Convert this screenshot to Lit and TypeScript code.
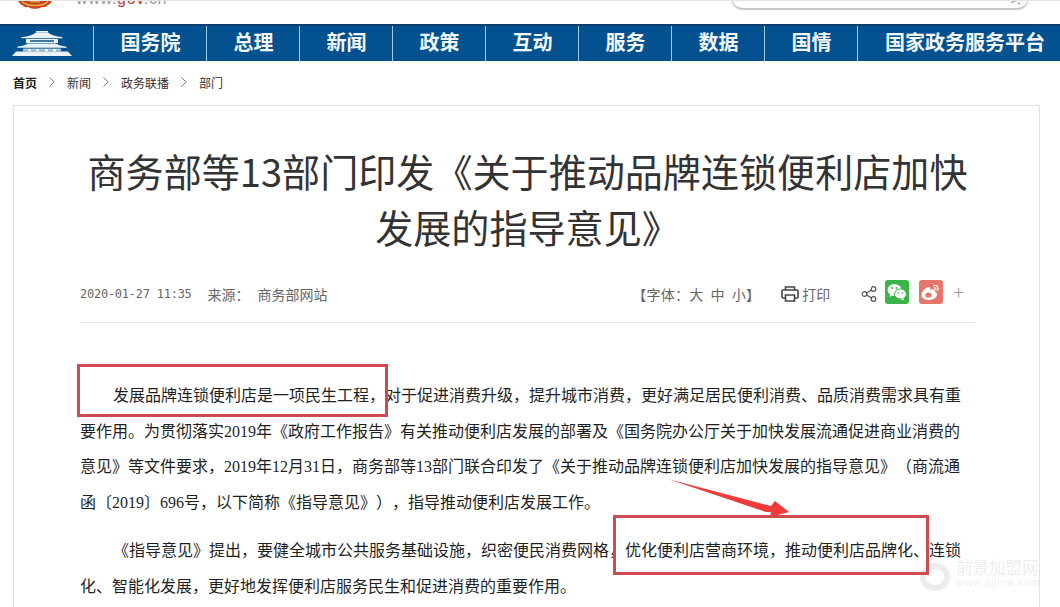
import { LitElement, html, css, unsafeCSS } from "lit";
import { customElement } from "lit/decorators.js";

const NAV = ["国务院", "总理", "新闻", "政策", "互动", "服务", "数据", "国情", "国家政务服务平台"];
const CJK = unsafeCSS(`"Noto Sans CJK SC", "Liberation Sans", sans-serif`);

const chevron = html`<i><svg width="6" height="10" viewBox="0 0 6 10" fill="none" stroke="#777" stroke-width="1"><path d="M.5 .5L5.200 5 .5 9.500"/></svg></i>`;

@customElement("app-root")
export class AppRoot extends LitElement {
  static styles = css`
    :host { display: block; width: 1060px; height: 607px; overflow: hidden; background: #fff; position: relative; font-family: ${CJK}; color: #333; text-spacing-trim: space-all; }
    .top { height: 24px; display: flex; overflow: hidden; position: relative; border-top: 1px solid #e4e4e4; box-sizing: border-box; }
    .emblem { margin: -1px 0 0 18px; flex: none; display: block; }
    .url { margin: -12px 0 0 24px; font: 16px/20px "Liberation Sans", sans-serif; letter-spacing: 0.7px; color: #9a9a9a; white-space: nowrap; }
    .url b { color: #b6433f; font-weight: 400; }
    .search { width: 298px; height: 30px; margin: -21px 31px 0 auto; border: 1px solid #c9c9c9; border-bottom-width: 2px; border-radius: 0 0 12px 12px; box-sizing: border-box; display: flex; align-items: flex-end; justify-content: flex-end; padding: 0 6px 3px 0; }
    nav { height: 37px; background: #03518f; border-top: 2px solid #0b3f6e; box-sizing: border-box; display: grid; grid-template-columns: 93px 113px repeat(7, 93px) 1fr; }
    .logo { display: flex; align-items: center; justify-content: center; padding-right: 9px; }
    .cell { border-left: 1px solid #a3cbe6; display: flex; align-items: center; justify-content: center; color: #f2f7fb; font-size: 20px; font-weight: 700; line-height: 1; padding: 0 0 4px 1px; box-sizing: border-box; white-space: nowrap; }
    .cell:last-child { padding-left: 12px; }
    .crumbs { height: 44px; display: flex; align-items: center; padding: 0 0 2px 13px; font-size: 12px; color: #333; box-sizing: border-box; }
    .crumbs b { font-weight: 700; color: #222; }
    .crumbs i { font-style: normal; width: 30px; display: flex; justify-content: center; }
    .card { margin: 0 20px 0 13px; border: 1px solid #e2e2e2; border-bottom: 0; padding: 37px 64px 0 66px; height: 520px; box-sizing: border-box; }
    h1 { margin: 0; font-size: 38.100px; line-height: 56px; font-weight: 400; text-align: center; color: #333; white-space: nowrap; }
    .meta { margin-top: 22px; height: 46px; padding-bottom: 12px; border-bottom: 1px solid #e3e3e3; display: flex; align-items: center; font-size: 14px; color: #666; box-sizing: border-box; }
    .date { font: 12px "DejaVu Sans Mono", "Liberation Mono", monospace; letter-spacing: -0.25px; margin-right: 16px; color: #666; }
    .src { margin-left: 8px; }
    .tools { margin-left: auto; display: flex; align-items: center; }
    .font { margin-right: 21px; white-space: pre; letter-spacing: 0.3px; }
    .print { display: flex; align-items: center; gap: 3px; margin-right: 31px; }
    .share { margin-right: 8px; }
    .btn { width: 24px; height: 24px; border-radius: 3px; display: flex; align-items: center; justify-content: center; margin: 0 10px 3px 0; }
    .wx { background: #3bb44a; }
    .wb { background: #e8756a; }
    .plus { font-size: 20px; color: #999; font-weight: 300; margin: -4px 11px 0 0; line-height: 1; }
    .body { margin-top: 55px; width: 880px; color: #1f1f1f; font-family: "Liberation Serif", ${CJK}; font-size: 16px; line-height: 35.6px; }
    .body p { margin: 0 0 13px; }
    .ln { display: block; white-space: nowrap; text-align: justify; text-align-last: justify; }
    .ln.end { text-align-last: left; }
    .ln.ind { padding-left: 33px; }
    .mark { position: absolute; border: 3px solid #cf4b4f; box-sizing: border-box; }
    .m1 { left: 77px; top: 364px; width: 311px; height: 53px; }
    .m2 { left: 613px; top: 515px; width: 316px; height: 60px; }
    .arrow { position: absolute; left: 660px; top: 470px; }
    .wm { position: absolute; left: 920px; top: 558px; display: flex; align-items: flex-start; gap: 6px; color: #000; opacity: .07; white-space: nowrap; }
    .wm span { width: 30px; height: 28px; margin-top: 5px; border: 6px solid #000; border-radius: 50%; box-sizing: border-box; flex: none; }
    .wm div { display: flex; flex-direction: column; font-size: 16.500px; line-height: 18px; }
    .wm small { font: 10.500px/12px "Liberation Sans", sans-serif; letter-spacing: 0.8px; }
  `;

  render() {
    return html`
      <div class="top">
        <svg class="emblem" width="34" height="9" viewBox="0 0 34 9">
          <path d="M0 0h34c-.5 3-2.500 4.500-5 5.500-1 1.500-3 2-5 1.500-2 1.300-5 1.800-7 1.800s-5-.5-7-1.800c-2 .5-4 0-5-1.500C2.500 4.500 .5 3 0 0z" fill="#c8431f"/>
          <path d="M4 1.500c3 3 6 4 13 4s10-1 13-4" fill="none" stroke="#e9b04a" stroke-width="1.500"/>
          <path d="M12 0h10v2.500H12z" fill="#e0903a"/>
        </svg>
        <div class="url">www.<b>gov</b>.cn</div>
        <div class="search">
          <svg width="12" height="6" viewBox="0 0 12 6" fill="none" stroke="#aaa" stroke-width="1.500"><path d="M1 4c3-2 6-3 9-3M8 4l2 1"/></svg>
        </div>
      </div>
      <nav>
        <div class="logo">
          <svg width="60" height="25" viewBox="0 0 60 25" fill="#eaf2f8">
            <path d="M24 0h12v1.500h-12z"/>
            <path d="M10 6c6-.5 11-2 14-4.500h12c3 2.500 8 4 14 4.500l1 1.200H9z"/>
            <path d="M14 8h32v4H14zM18 9.300v1.400h24V9.300z" fill-rule="evenodd"/>
            <path d="M6 15.500c4-.3 8-1.500 10-3h28c2 1.500 6 2.700 10 3l1 1.200H5z"/>
            <path d="M11 17.500h38v3H11z" opacity=".7"/>
            <path d="M16 18.300h3v2h-3zM24 18.300h3v2h-3zM33 18.300h3v2h-3zM41 18.300h3v2h-3z" fill="#fff"/>
            <path d="M4 20.500h52l4 4.500H0z"/>
          </svg>
        </div>
        ${NAV.map((n) => html`<div class="cell">${n}</div>`)}
      </nav>
      <div class="crumbs">
        <b>首页</b>${chevron}<span>新闻</span>${chevron}<span>政务联播</span>${chevron}<span>部门</span>
      </div>
      <div class="card">
        <h1>商务部等13部门印发《关于推动品牌连锁便利店加快<br />发展的指导意见》</h1>
        <div class="meta">
          <span class="date">2020-01-27 11:35</span><span>来源：</span><span class="src">商务部网站</span>
          <div class="tools">
            <span class="font">【字体：大  中  小】</span>
            <span class="print">
              <svg width="18" height="16" viewBox="0 0 18 16" fill="none" stroke="#444" stroke-width="1.600">
                <path d="M4.500 4V1h9v3M4.500 12H2a1 1 0 0 1-1-1V5a1 1 0 0 1 1-1h14a1 1 0 0 1 1 1v6a1 1 0 0 1-1 1h-2.500"/>
                <path d="M4.500 9h9v6h-9z"/>
              </svg>
              打印
            </span>
            <svg class="share" width="16" height="16" viewBox="0 0 16 16" fill="none" stroke="#555" stroke-width="1.200">
              <circle cx="3.500" cy="8" r="2.300"/><circle cx="12.500" cy="3" r="2.300"/><circle cx="12.500" cy="13" r="2.300"/>
              <path d="M5.500 7l5-3M5.500 9l5 3"/>
            </svg>
            <span class="btn wx">
              <svg width="20" height="18" viewBox="0 0 20 18" fill="#fff">
                <ellipse cx="7.500" cy="7" rx="7" ry="6"/><path d="M3.500 11l-1 3 3.500-2z"/>
                <ellipse cx="13.500" cy="11" rx="6" ry="5" stroke="#3bb44a"/><path d="M16 15l1.500 2.500-4-1.500z"/>
                <circle cx="5.200" cy="5" r="1" fill="#3bb44a"/><circle cx="9.500" cy="5" r="1" fill="#3bb44a"/>
                <circle cx="11.500" cy="10" r=".8" fill="#3bb44a"/><circle cx="15.500" cy="10" r=".8" fill="#3bb44a"/>
              </svg>
            </span>
            <span class="btn wb">
              <svg width="20" height="18" viewBox="0 0 20 18" fill="none">
                <path d="M8 17c-4 0-7.500-1.800-7.500-5C.5 8.500 5.500 3.500 8 4c2 .4 1 2.800 1 2.800s3.500-1.300 4.500 0c.6.800.2 1.700.2 1.700s2.300.5 2.300 3c0 3-4 5.500-8 5.500z" fill="#fff"/>
                <ellipse cx="7.500" cy="12" rx="3.200" ry="2.600" fill="#e8756a"/>
                <path d="M12.500 2.500c3-.8 5.500 2 4.500 5M12.800 5c1.500-.4 2.500 1 2 2.300" stroke="#fff" stroke-width="1.300"/>
              </svg>
            </span>
            <span class="plus">+</span>
          </div>
        </div>
        <div class="body">
          <p>
            <span class="ln ind">发展品牌连锁便利店是一项民生工程，对于促进消费升级，提升城市消费，更好满足居民便利消费、品质消费需求具有重</span>
            <span class="ln">要作用。为贯彻落实2019年《政府工作报告》有关推动便利店发展的部署及《国务院办公厅关于加快发展流通促进商业消费的</span>
            <span class="ln">意见》等文件要求，2019年12月31日，商务部等13部门联合印发了《关于推动品牌连锁便利店加快发展的指导意见》（商流通</span>
            <span class="ln end">函〔2019〕696号，以下简称《指导意见》），指导推动便利店发展工作。</span>
          </p>
          <p>
            <span class="ln ind">《指导意见》提出，要健全城市公共服务基础设施，织密便民消费网格，优化便利店营商环境，推动便利店品牌化、连锁</span>
            <span class="ln end">化、智能化发展，更好地发挥便利店服务民生和促进消费的重要作用。</span>
          </p>
        </div>
      </div>
      <div class="wm"><span></span><div>前景加盟网<small>www.qjjmw.com</small></div></div>
      <div class="mark m1"></div>
      <div class="mark m2"></div>
      <svg class="arrow" width="130" height="50" viewBox="0 0 130 50"><path d="M8 9L111 36l4-5 14 11-19 5 1-5L106 42z" fill="#ee3b3b"/></svg>
    `;
  }
}
